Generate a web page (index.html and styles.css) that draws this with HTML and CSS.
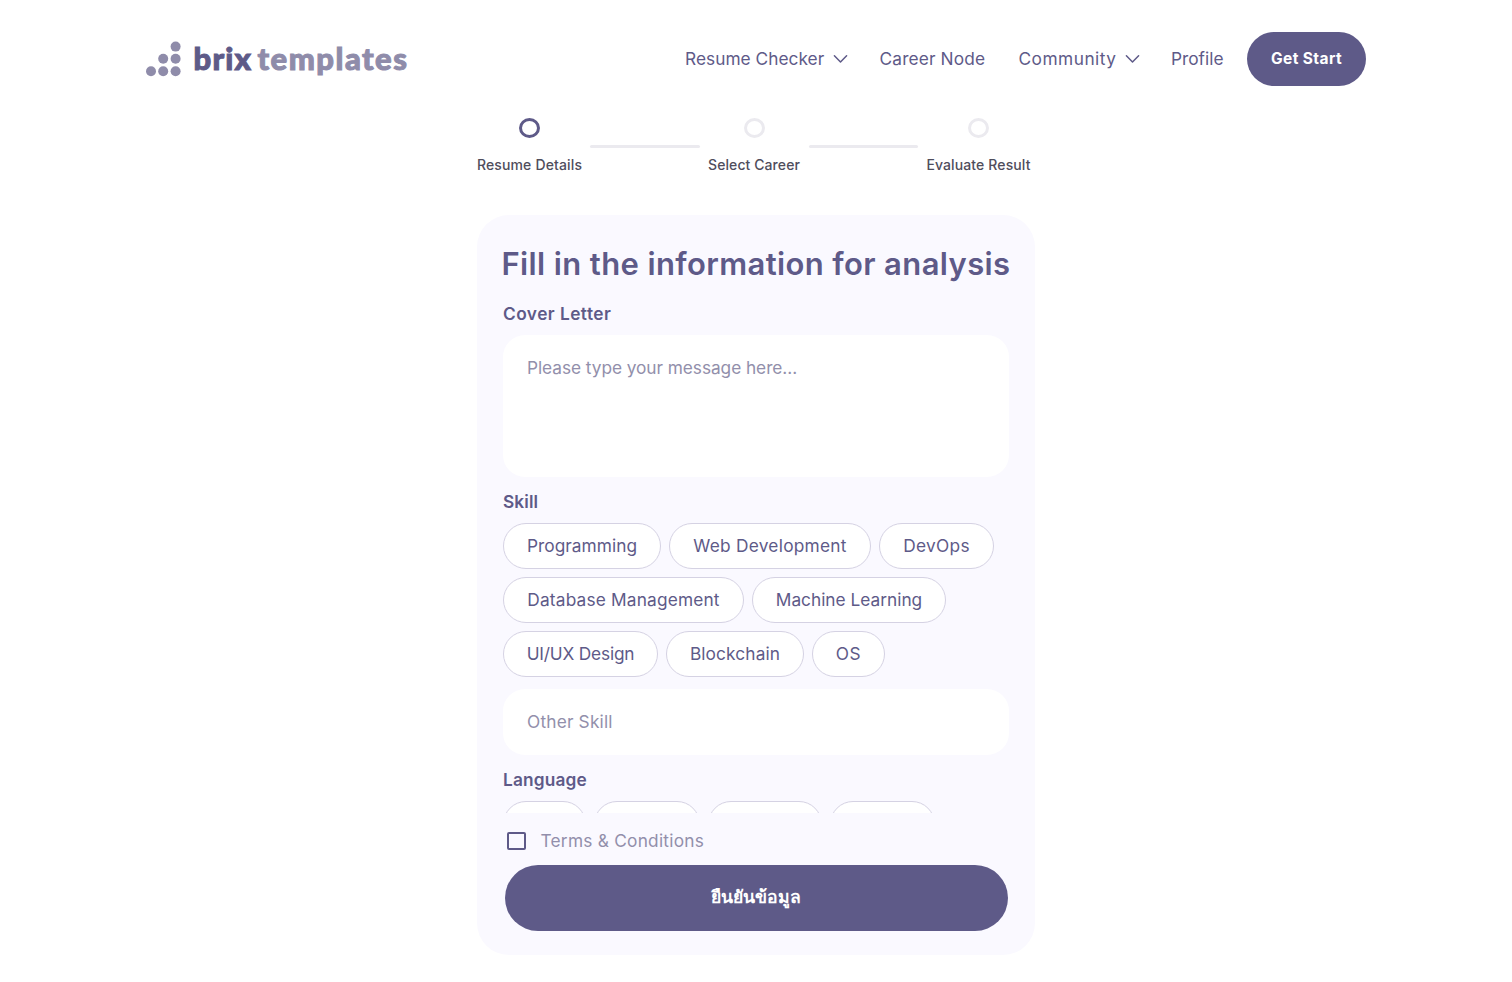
FILE: index.html
```
<!DOCTYPE html>
<html lang="en">
<head>
<meta charset="utf-8">
<title>Resume Details</title>
<link rel="stylesheet" href="styles.css">
</head>
<body>
<header class="header">
  <a class="logo">
    <svg class="logo-mark" width="36" height="36" viewBox="0 0 36 36" fill="#8f8caa">
      <circle cx="29.6" cy="5.6" r="5"/>
      <circle cx="17.2" cy="17.8" r="5"/><circle cx="29.6" cy="17.8" r="5"/>
      <circle cx="5" cy="30.2" r="5"/><circle cx="17.2" cy="30.2" r="5"/><circle cx="29.6" cy="30.2" r="5"/>
    </svg>
    <span class="logo-brix">brix</span><span class="logo-templates">templates</span>
  </a>
  <nav class="nav">
    <a class="nav-item nav-resume"><span>Resume Checker</span><svg class="chevron" width="15" height="10" viewBox="0 0 15 10"><path d="M1.4 1.8 7.5 8 13.6 1.8"/></svg></a>
    <a class="nav-item nav-career">Career Node</a>
    <a class="nav-item nav-community"><span>Community</span><svg class="chevron" width="15" height="10" viewBox="0 0 15 10"><path d="M1.4 1.8 7.5 8 13.6 1.8"/></svg></a>
    <a class="nav-item nav-profile">Profile</a>
    <a class="start">Get Start</a>
  </nav>
</header>

<section class="stepper">
  <div class="step step-details active"><i class="dot"></i><span>Resume Details</span></div>
  <i class="line"></i>
  <div class="step step-career"><i class="dot"></i><span>Select Career</span></div>
  <i class="line"></i>
  <div class="step step-result"><i class="dot"></i><span>Evaluate Result</span></div>
</section>

<main class="card">
  <h1 class="title">Fill in the information for analysis</h1>
  <div class="fields">
    <h2 class="label label-cover">Cover Letter</h2>
    <div class="input message">Please type your message here...</div>
    <h2 class="label">Skill</h2>
    <div class="chips">
      <span class="chip chip-programming">Programming</span>
      <span class="chip chip-web">Web Development</span>
      <span class="chip chip-devops">DevOps</span>
      <span class="chip chip-database">Database Management</span>
      <span class="chip chip-ml">Machine Learning</span>
      <span class="chip chip-design">UI/UX Design</span>
      <span class="chip chip-blockchain">Blockchain</span>
      <span class="chip chip-os">OS</span>
    </div>
    <div class="input other">Other Skill</div>
    <h2 class="label label-language">Language</h2>
    <div class="chips">
      <span class="chip lang-1"></span>
      <span class="chip lang-2"></span>
      <span class="chip lang-3"></span>
      <span class="chip lang-4"></span>
    </div>
  </div>
  <label class="terms"><i class="checkbox"></i><span>Terms &amp; Conditions</span></label>
  <button class="confirm" lang="th">ยืนยันข้อมูล</button>
</main>
</body>
</html>
```
FILE: styles.css
```
* { box-sizing: border-box; }

body {
  margin: 0;
  height: 982px;
  overflow: hidden;
  background: #fff;
  color: #5e5a88;
  font: 400 17.3px/26px "Inter", sans-serif;
}

.header {
  display: flex;
  align-items: center;
  justify-content: space-between;
  height: 118px;
  padding: 0 146px 0 145.5px;
}

.logo {
  display: flex;
  align-items: center;
  font: 900 31px/38px "Lato", sans-serif;
}
.logo-brix,
.logo-templates { padding-bottom: 2px; }
.logo-brix {
  width: 64px;
  margin-left: 12px;
  letter-spacing: 1.2px;
  -webkit-text-stroke: 1px currentColor;
}
.logo-templates {
  color: #8f8caa;
  letter-spacing: 1.5px;
  -webkit-text-stroke: 1px currentColor;
}

.nav { display: flex; align-items: center; white-space: nowrap; }
.nav-item { display: flex; align-items: center; justify-content: space-between; }
.nav-resume { width: 163px; margin-right: 31.5px; letter-spacing: 0.03px; }
.nav-career { width: 108px; margin-right: 31px; letter-spacing: 0.15px; }
.nav-community { width: 121px; margin-right: 31.5px; letter-spacing: 0.48px; }
.nav-profile { width: 53px; margin-right: 23px; }
.chevron { fill: none; stroke: #5e5a88; stroke-width: 1.5; stroke-linecap: round; stroke-linejoin: round; }
.start {
  width: 119px;
  height: 54px;
  border-radius: 27px;
  background: #5e5a88;
  color: #fff;
  font-size: 15.5px;
  font-weight: 700;
  line-height: 54px;
  letter-spacing: 0.4px;
  text-align: center;
}

.stepper {
  display: flex;
  gap: 8px;
  width: 558px;
  height: 57px;
  margin: 0 auto;
  color: #4f4d5c;
  font-size: 14px;
  font-weight: 500;
  line-height: 20px;
}
.step {
  display: flex;
  flex-direction: column;
  align-items: center;
  justify-content: space-between;
  white-space: nowrap;
}
.step-details { width: 105px; letter-spacing: 0.15px; }
.step-career { width: 93px; letter-spacing: 0.08px; }
.step-result { width: 105px; letter-spacing: 0.12px; }
.dot {
  width: 21px;
  height: 20px;
  border: 3px solid #ebeaef;
  border-radius: 50%;
}
.active .dot { border-color: #5e5a88; }
.line { width: 109.5px; height: 3px; margin-top: 27px; border-radius: 2px; background: #ebeaef; }

.card {
  width: 558px;
  height: 740px;
  margin: 40px auto 0;
  padding: 28px 26px 24px;
  border-radius: 32px;
  background: #faf9ff;
}
.title {
  margin: 0 -8px 16px;
  font-size: 31px;
  font-weight: 600;
  line-height: 42px;
  letter-spacing: 0.38px;
  text-align: center;
  white-space: nowrap;
}
.fields { height: 512px; overflow: hidden; }
.label { margin: 12px 0 8px; font-size: 17.3px; font-weight: 600; line-height: 26px; letter-spacing: 0.1px; }
.label-cover { margin-top: 0; letter-spacing: 0.46px; }
.label-language { letter-spacing: 0.15px; }
.input { border-radius: 22px; padding: 20px 24px; background: #fff; color: #928fab; }
.message { height: 142px; letter-spacing: -0.06px; }
.other { height: 66px; margin-top: 12px; letter-spacing: 0.18px; }

.chips { display: flex; flex-wrap: wrap; gap: 8px; }
.chip {
  height: 46px;
  border: 1px solid #d5d2e3;
  border-radius: 23px;
  background: #fff;
  line-height: 44px;
  text-align: center;
}
.chip-programming { width: 158px; letter-spacing: 0.05px; }
.chip-web { width: 202px; letter-spacing: 0.26px; }
.chip-devops { width: 115px; letter-spacing: 0.3px; }
.chip-database { width: 241px; letter-spacing: 0.17px; }
.chip-ml { width: 194px; }
.chip-design { width: 155px; letter-spacing: -0.18px; }
.chip-blockchain { width: 138px; letter-spacing: 0.12px; }
.chip-os { width: 73px; letter-spacing: 0.5px; }
.lang-1 { width: 83px; }
.lang-2 { width: 106px; }
.lang-3 { width: 114px; }
.lang-4 { width: 105px; }

.terms {
  display: flex;
  align-items: center;
  gap: 14.5px;
  height: 52px;
  padding: 4px 0 0 4px;
  color: #928fab;
  letter-spacing: 0.24px;
}
.checkbox { width: 19px; height: 18px; border: 2px solid #5e5a88; border-radius: 2px; }
.confirm {
  display: block;
  width: 503px;
  height: 66px;
  margin: 0 auto;
  padding: 0 0 2px;
  border: 0;
  border-radius: 33px;
  background: #5e5a88;
  color: #fff;
  font: 700 17.6px/64px "Inter", sans-serif;
}
```
